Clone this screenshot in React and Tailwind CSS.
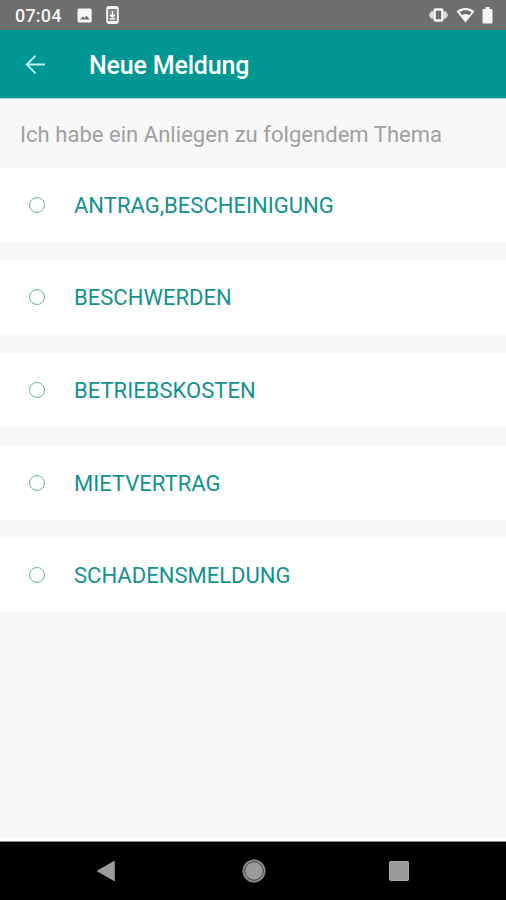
const topics = [
  "ANTRAG,BESCHEINIGUNG",
  "BESCHWERDEN",
  "BETRIEBSKOSTEN",
  "MIETVERTRAG",
  "SCHADENSMELDUNG",
];

function StatusBar() {
  return (
    <div className="flex h-[30px] shrink-0 items-center bg-[#6e6e6e] pl-[15px] pr-[13px] text-[#f5f5f5]">
      <span className="w-[62px] pt-px text-[18px] font-medium leading-none tracking-[0.200px]">07:04</span>
      <svg className="h-[15px] w-[15px]" viewBox="0 0 15 15">
        <path fill="currentColor" fillRule="evenodd" d="M2 .5h11.200a1.500 1.500 0 0 1 1.500 1.500v11a1.500 1.500 0 0 1-1.500 1.500H2A1.500 1.500 0 0 1 .5 13V2A1.500 1.500 0 0 1 2 .5ZM3 11.500h9.500L9.700 7.700 7.400 10.300 5.600 8.500Z" />
      </svg>
      <svg className="ml-[14px] h-[18px] w-[13px]" viewBox="0 0 13 18">
        <rect x="1.100" y="1" width="10.800" height="16" rx="1.500" fill="#858585" stroke="currentColor" strokeWidth="1.800" />
        <path d="M1.500 2h10M1.500 16h10" stroke="currentColor" strokeWidth="2" />
        <path d="M6.500 5v6M4 8.700l2.500 2.500L9 8.700M3.800 13h5.400" fill="none" stroke="currentColor" strokeWidth="1.500" />
      </svg>
      <svg className="ml-auto h-[16px] w-[19px]" viewBox="0 0 19 16">
        <path d="M3 4.500v7M16 4.500v7" stroke="currentColor" strokeWidth="3" opacity=".85" />
        <path d="M1 6.500v3M18 6.500v3" stroke="currentColor" strokeWidth="1.800" opacity=".7" />
        <rect x="5.600" y="2.500" width="7.800" height="11" rx="1" fill="#6e6e6e" stroke="currentColor" strokeWidth="2.500" />
      </svg>
      <svg className="ml-[8px] h-[16px] w-[19px]" viewBox="0 0 19 16">
        <path d="M9.500 15.500.5 4.300C5.500-.2 13.500-.2 18.500 4.300Z" fill="currentColor" />
        <path d="M3.700 5.200c3.500-2.600 8.300-2.600 11.800 0l-2.400 3c-2-1.500-5-1.500-7 0Z" fill="#6e6e6e" />
      </svg>
      <svg className="ml-[7px] h-[17px] w-[11px]" viewBox="0 0 11 17">
        <path d="M3.500 0h4v2H9.500a1 1 0 0 1 1 1v12.500a1 1 0 0 1-1 1h-8a1 1 0 0 1-1-1V3a1 1 0 0 1 1-1h2Z" fill="currentColor" />
      </svg>
    </div>
  );
}

function Topic({ label }) {
  return (
    <li className="flex h-[74px] shrink-0 items-center bg-white pl-[29px]">
      <span className="size-[16px] shrink-0 rounded-full border border-[#65b5a5]" />
      <span className="ml-[29px] whitespace-nowrap pt-[2px] text-[22px] leading-[26px] tracking-[0.020px] text-[#12918e]">{label}</span>
    </li>
  );
}

export default function App() {
  return (
    <div className="flex h-[900px] w-[506px] flex-col overflow-hidden bg-[#f7f7f7] font-[Roboto,sans-serif]">
      <StatusBar />
      <header className="flex h-[69px] shrink-0 items-center border-b border-[#a5d6d5] bg-[#009694] pl-[25px]">
        <svg className="mt-px h-[20px] w-[20px]" viewBox="0 0 20 20" fill="none" stroke="#b5f0ec" strokeWidth="1.900">
          <path d="M20 9.500H1.500M10.500 .8 1.700 9.500l8.800 8.900" />
        </svg>
        <h1 className="ml-[44px] pt-[4px] text-[25px] font-medium leading-[30px] tracking-[-0.180px] text-white">Neue Meldung</h1>
      </header>
      <p className="flex h-[68.600px] shrink-0 items-center whitespace-nowrap pl-[20px] pt-[3px] text-[22px] tracking-[0.040px] text-[#a0a0a0]">
        Ich habe ein Anliegen zu folgendem Thema
      </p>
      <ul className="flex flex-col gap-[18.700px]">
        {topics.map((t) => <Topic key={t} label={t} />)}
      </ul>
      <nav className="mt-auto flex h-[62px] shrink-0 items-center border-t-[3px] border-white bg-black pl-[96px] shadow-[inset_0_1px_0_#8a8a8a]">
        <svg className="h-[22px] w-[19px]" viewBox="0 0 19 22"><path d="M.5 11 18.800.5v21Z" fill="#9b9b9b" /></svg>
        <svg className="ml-[127px] size-[24px]" viewBox="0 0 24 24">
          <circle cx="12" cy="12" r="11.200" fill="#9b9b9b" stroke="#777" />
          <circle cx="12" cy="12" r="9.300" fill="none" stroke="#3c3c3c" strokeWidth="1" />
        </svg>
        <svg className="ml-[123px] size-[20px]" viewBox="0 0 20 20"><rect x=".5" y=".5" width="19" height="19" rx="1" fill="#9b9b9b" stroke="#aaa" /></svg>
      </nav>
    </div>
  );
}
